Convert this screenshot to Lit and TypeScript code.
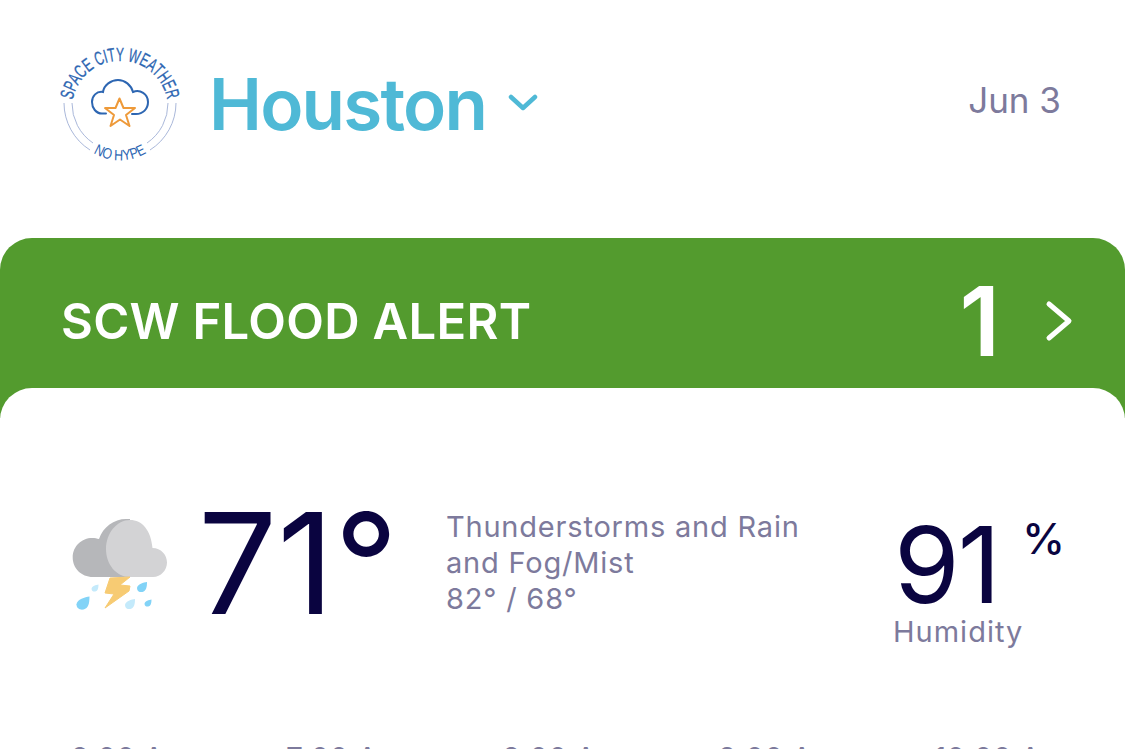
import { LitElement, html, css, svg } from "lit";
import { customElement } from "lit/decorators.js";

const drop = (x: number, y: number, s: number, fill: string) =>
  svg`<path transform="translate(${x} ${y}) scale(${s})" d="M1 -1 C0.3 -0.9 -0.9 -0.6 -1 0.2 C-1 0.9 -0.4 1.1 0.1 1 C0.8 0.8 1 0.1 1 -1 Z" fill=${fill}></path>`;

@customElement("app-root")
export class AppRoot extends LitElement {
  static styles = css`
    :host {
      display: block;
      width: 1125px;
      height: 749px;
      overflow: hidden;
      background: #fff;
      font-family: Inter, "Liberation Sans", sans-serif;
    }
    .header {
      height: 238px;
      box-sizing: border-box;
      padding: 42px 64px 0 60px;
      display: flex;
      align-items: flex-start;
    }
    .logo { width: 122px; height: 122px; flex: none; }
    .city {
      margin-left: 27px;
      font-size: 71px;
      line-height: 124px;
      font-weight: 600;
      color: #4fb9d6;
      letter-spacing: -1.8px;
    }
    .chev { margin: 50px 0 0 22px; width: 32px; height: 22px; }
    .date {
      margin-left: auto;
      font-size: 35px;
      line-height: 116px;
      color: #7d7a9c;
    }
    .alert {
      height: 180px;
      box-sizing: border-box;
      background: #539b2e;
      border-radius: 32px 32px 0 0;
      padding: 0 52px 14px 61px;
      display: flex;
      align-items: center;
      color: #fff;
    }
    .alert-title { font-size: 49px; font-weight: 600; letter-spacing: 0.3px; }
    .alert-count { margin-left: auto; font-size: 96px; font-weight: 600; line-height: 1; }
    .alert-chev { margin-left: 45px; width: 28px; height: 42px; }
    .panel {
      margin-top: -30px;
      height: 362px;
      background: #fff;
      border-radius: 32px 32px 0 0;
      box-sizing: border-box;
      position: relative;
      padding: 100px 60px 0 70px;
    }
    .now { display: flex; align-items: flex-start; }
    .wx { width: 100px; height: 100px; margin-top: 30px; flex: none; overflow: visible; }
    .temp {
      margin-left: 28px;
      font-size: 140px;
      line-height: 150px;
      color: #0a0440;
      letter-spacing: 0;
    }
    .desc {
      margin: 21px 0 0 48px;
      width: 400px;
      font-size: 29px;
      line-height: 36px;
      letter-spacing: 0.8px;
      color: #7d7a9c;
    }
    .hum { margin-left: auto; width: 172px; position: relative; }
    .hum-val { font-size: 106px; line-height: 100px; margin-top: 27px; color: #0a0440; letter-spacing: -2px; padding-left: 1px; }
    .hum-pct { position: absolute; top: 24px; right: 0; font-size: 43px; font-weight: 500; color: #0a0440; }
    .hum-label { font-size: 29px; line-height: 34px; letter-spacing: 1px; color: #7d7a9c; }
    .days {
      display: grid;
      grid-template-columns: repeat(5, 216px);
      position: absolute;
      left: 70px;
      top: 352px;
      font-size: 30px;
      line-height: 36px;
      color: #7d7a9c;
    }
  `;

  private logo() {
    return html`<svg class="logo" viewBox="0 0 122 122" fill="none">
      <defs>
        <path id="arcTop" d="M12.800 58 A48 48 0 0 1 107.200 58"></path>
        <path id="arcBot" d="M28 107 A51 51 0 0 0 92 107"></path>
      </defs>
      <text font-family="'Liberation Sans Narrow','Liberation Sans',sans-serif" font-size="19" fill="#2d66b2" stroke="#2d66b2" stroke-width="0.3"><textPath href="#arcTop" textLength="133" lengthAdjust="spacingAndGlyphs">SPACE CITY WEATHER</textPath></text>
      <text font-family="'Liberation Sans Narrow','Liberation Sans',sans-serif" font-size="15" fill="#2d66b2" text-anchor="middle"><textPath href="#arcBot" startOffset="50%" textLength="56" lengthAdjust="spacingAndGlyphs">NO HYPE</textPath></text>
      <path d="M4 61 A56 56 0 0 0 30 108 M12 61 A48 48 0 0 0 33 101" stroke="#aab8da" stroke-width="1"></path>
      <path d="M116 61 A56 56 0 0 1 90 108 M108 61 A48 48 0 0 1 87 101" stroke="#aab8da" stroke-width="1"></path>
      <path d="M46 71.500 H42 C36 71.500 32 66 32 60 C32 54 36.500 49 43 50 C44 43 51 38 58 38 C65 38 71 43 73 50 C80 47 88 52 88 60 C88 67 83 72 76 72 H72" stroke="#2d66b2" stroke-width="2" stroke-linecap="round"></path>
      <path d="M59.500 56.500 L63.500 66 L75 66 L66 73 L69.500 84 L60 77.500 L50.500 84 L54 73 L45 66 L55.500 66 Z" stroke="#ee9a3a" stroke-width="2" stroke-linejoin="round"></path>
    </svg>`;
  }

  private weather() {
    return html`<svg class="wx" viewBox="0 0 100 100">
      <path d="M60 59 H23 C11 59 2.700 50 2.700 39.500 C2.700 28 12 20 22 20 C25 20 27 20.500 29 21 C33 9 44 1 56 1 H60 Z" fill="#b6b7ba"></path>
      <path d="M60 59 C46 59 36 46 36 31 C36 15 47 2 60 2 C72 2 81 12 82.500 30 C91 30 97 37 97 44.500 C97 52 91 59 83 59 Z" fill="#d3d3d5"></path>
      <path d="M40 60 L60 59 L50 67 L60 68 L59 73 L35 90 L44 76 L35 75 Z" fill="#f7cb73" stroke="#f7cb73" stroke-linejoin="round"></path>
      ${drop(25, 70, 3.500, "#c4eafb")}
      ${drop(72, 69, 5, "#82d3f7")}
      ${drop(13, 85, 6.500, "#82d3f7")}
      ${drop(60, 86, 5, "#c4eafb")}
      ${drop(78, 85, 3.500, "#82d3f7")}
    </svg>`;
  }

  render() {
    return html`
      <div class="header">
        ${this.logo()}
        <div class="city">Houston</div>
        <svg class="chev" viewBox="0 0 32 22" fill="none"><path d="M3 5 L15 16 L27 5" stroke="#4fb9d6" stroke-width="4.500" stroke-linecap="round" stroke-linejoin="round"></path></svg>
        <div class="date">Jun 3</div>
      </div>
      <div class="alert">
        <div class="alert-title">SCW FLOOD ALERT</div>
        <div class="alert-count">1</div>
        <svg class="alert-chev" viewBox="0 0 28 42" fill="none"><path d="M4 4 L24 21 L4 38" stroke="#fff" stroke-width="5" stroke-linecap="round" stroke-linejoin="round"></path></svg>
      </div>
      <div class="panel">
        <div class="now">
          ${this.weather()}
          <div class="temp">71°</div>
          <div class="desc">Thunderstorms and Rain and Fog/Mist<br />82° / 68°</div>
          <div class="hum">
            <div class="hum-val">91</div>
            <div class="hum-pct">%</div>
            <div class="hum-label">Humidity</div>
          </div>
        </div>
        <div class="days">
          <div>6:00 A</div><div>7:00 A</div><div>8:00 A</div><div>9:00 A</div><div>10:00 A</div>
        </div>
      </div>
    `;
  }
}
